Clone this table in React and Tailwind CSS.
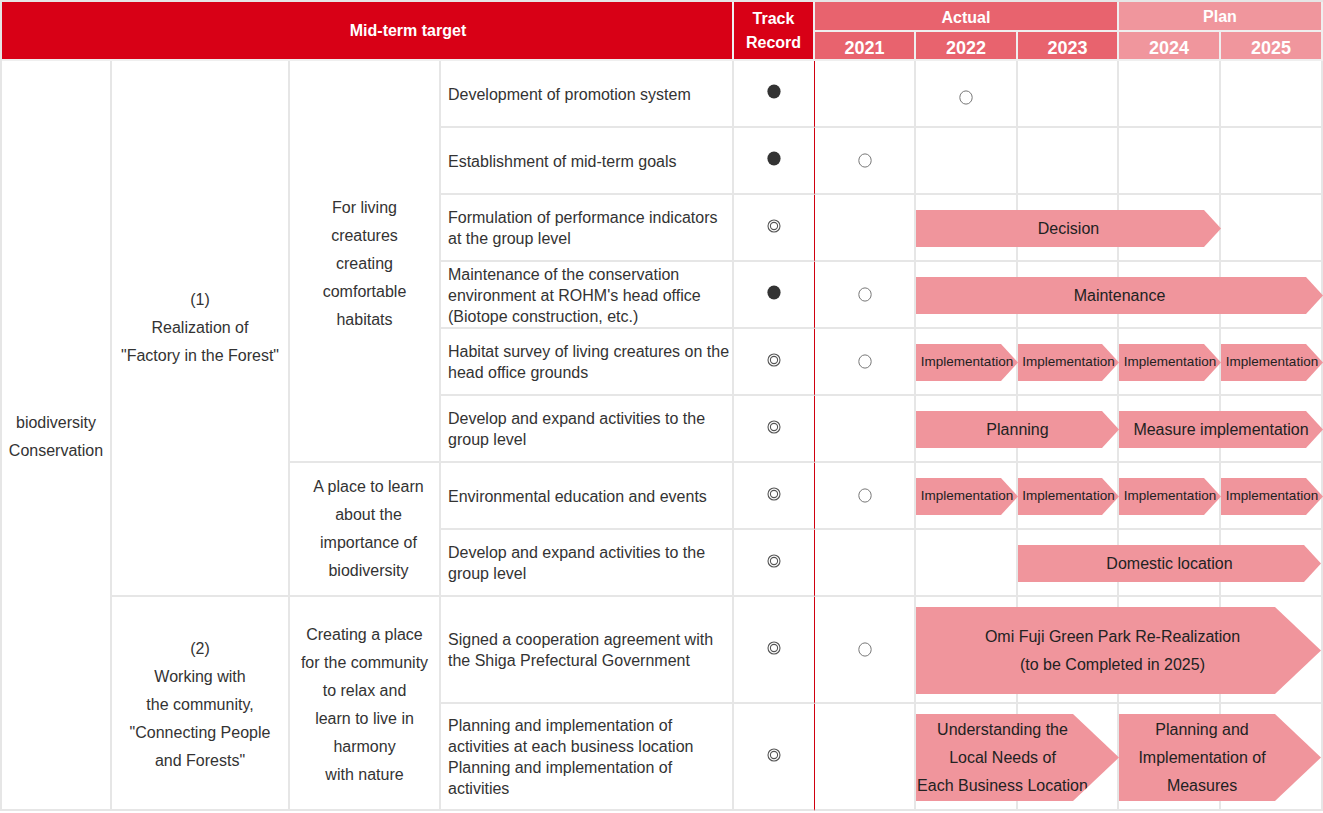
import React from 'react'
import clsx from 'clsx'

const rowStart = [
  'row-start-3',
  'row-start-4',
  'row-start-5',
  'row-start-6',
  'row-start-7',
  'row-start-8',
  'row-start-9',
  'row-start-10',
  'row-start-11',
  'row-start-12',
]
const colStart = {
  6: 'col-start-6',
  7: 'col-start-7',
  8: 'col-start-8',
  9: 'col-start-9',
  10: 'col-start-10',
}
const colSpan = { 1: 'col-span-1', 2: 'col-span-2', 3: 'col-span-3', 4: 'col-span-4' }

const rows = [
  { text: 'Development of promotion system', track: 'full', mark: 7 },
  { text: 'Establishment of mid-term goals', track: 'full', mark: 6 },
  {
    text: 'Formulation of performance indicators at the group level',
    track: 'double',
    arrows: [{ from: 7, span: 3, label: 'Decision' }],
  },
  {
    text: "Maintenance of the conservation environment at ROHM's head office (Biotope construction, etc.)",
    track: 'full',
    mark: 6,
    arrows: [{ from: 7, span: 4, label: 'Maintenance' }],
  },
  {
    text: 'Habitat survey of living creatures on the head office grounds',
    track: 'double',
    mark: 6,
    arrows: [7, 8, 9, 10].map((c) => ({ from: c, span: 1, label: 'Implementation', small: true })),
  },
  {
    text: 'Develop and expand activities to the group level',
    track: 'double',
    arrows: [
      { from: 7, span: 2, label: 'Planning' },
      { from: 9, span: 2, label: 'Measure implementation' },
    ],
  },
  {
    text: 'Environmental education and events',
    track: 'double',
    mark: 6,
    arrows: [7, 8, 9, 10].map((c) => ({ from: c, span: 1, label: 'Implementation', small: true })),
  },
  {
    text: 'Develop and expand activities to the group level',
    track: 'double',
    arrows: [{ from: 8, span: 3, label: 'Domestic location', inset: true }],
  },
  {
    text: 'Signed a cooperation agreement with the Shiga Prefectural Government',
    track: 'double',
    mark: 6,
    arrows: [
      {
        from: 7,
        span: 4,
        big: true,
        inset: true,
        pad: 'pr-[12px]',
        label: (
          <>
            Omi Fuji Green Park Re-Realization
            <br />
            (to be Completed in 2025)
          </>
        ),
      },
    ],
  },
  {
    text: 'Planning and implementation of activities at each business location Planning and implementation of activities',
    track: 'double',
    arrows: [
      {
        from: 7,
        span: 2,
        big: true,
        pad: 'pr-[30px]',
        label: (
          <>
            Understanding the
            <br />
            Local Needs of
            <br />
            Each Business Location
          </>
        ),
      },
      {
        from: 9,
        span: 2,
        big: true,
        inset: true,
        pad: 'pr-[36px]',
        label: (
          <>
            Planning and
            <br />
            Implementation of
            <br />
            Measures
          </>
        ),
      },
    ],
  },
]

function Mark({ type }) {
  if (type === 'full')
    return (
      <svg width="14" height="15" viewBox="0 0 14 15">
        <ellipse cx="7" cy="7.5" rx="6.6" ry="7" fill="#333" />
      </svg>
    )
  if (type === 'double')
    return (
      <svg width="14" height="14" viewBox="0 0 14 14">
        <circle cx="7" cy="7" r="6" fill="none" stroke="#555" strokeWidth="1.1" />
        <circle cx="7" cy="7" r="3.6" fill="none" stroke="#555" strokeWidth="1.1" />
      </svg>
    )
  return (
    <svg width="14" height="15" viewBox="0 0 14 15">
      <ellipse cx="7" cy="7.5" rx="6.2" ry="6.6" fill="#fff" stroke="#777" strokeWidth="1" />
    </svg>
  )
}

function Arrow({ row, a }) {
  return (
    <div
      className={clsx(
        'relative z-10 self-center flex items-center justify-center whitespace-nowrap bg-[#f0959c] text-center text-[#222]',
        colStart[a.from],
        colSpan[a.span],
        rowStart[row],
        a.big
          ? 'h-[87px] leading-[28px] [clip-path:polygon(0_0,calc(100%_-_46px)_0,100%_50%,calc(100%_-_46px)_100%,0_100%)]'
          : 'h-[37px] [clip-path:polygon(0_0,calc(100%_-_17px)_0,100%_50%,calc(100%_-_17px)_100%,0_100%)]',
        a.small ? 'text-[13.5px]' : 'text-[16px]',
        a.inset && 'mr-[2px]',
        a.pad
      )}
    >
      <span>{a.label}</span>
    </div>
  )
}

const head = 'flex items-center justify-center text-center font-bold text-white border-r-2 border-b-2 border-[#efefef]'
const cell = 'border-r-2 border-b-2 border-[#e6e6e6]'
const side = 'flex items-center justify-center text-center leading-[28px] ' + cell

export default function App() {
  return (
    <div className="w-[1323px] bg-white font-['Liberation_Sans',Arial,sans-serif] text-[16px] text-[#333]">
      <div className="grid grid-cols-[110px_178px_151px_293px_81px_101px_102px_101px_102px_102px] grid-rows-[30px_29px_repeat(8,67px)_107px_107px] border-l-2 border-t-2 border-[#e6e6e6]">
        {/* header */}
        <div className={clsx(head, 'col-start-1 col-span-4 row-start-1 row-span-2 bg-[#d80016] pl-[82px] pt-[1px]')}>
          Mid-term target
        </div>
        <div className={clsx(head, 'col-start-5 row-start-1 row-span-2 bg-[#d80016] leading-[24px] pt-[1px]')}>
          Track
          <br />
          Record
        </div>
        <div className={clsx(head, 'col-start-6 col-span-3 row-start-1 bg-[#e8636e] pt-[3px]')}>Actual</div>
        <div className={clsx(head, 'col-start-9 col-span-2 row-start-1 bg-[#f0969d] pt-[1px]')}>Plan</div>
        <div className={clsx(head, 'col-start-6 row-start-2 bg-[#e8636e] text-[18px] pt-[5px]')}>2021</div>
        <div className={clsx(head, 'col-start-7 row-start-2 bg-[#e8636e] text-[18px] pt-[5px]')}>2022</div>
        <div className={clsx(head, 'col-start-8 row-start-2 bg-[#e8636e] text-[18px] pt-[5px]')}>2023</div>
        <div className={clsx(head, 'col-start-9 row-start-2 bg-[#f0969d] text-[18px] pt-[5px]')}>2024</div>
        <div className={clsx(head, 'col-start-10 row-start-2 bg-[#f0969d] text-[18px] pt-[5px]')}>2025</div>

        {/* left groups */}
        <div className={clsx(side, 'col-start-1 row-start-3 row-span-10')}>
          <p className="mt-[4px]">
            biodiversity
            <br />
            Conservation
          </p>
        </div>
        <div className={clsx(side, 'col-start-2 row-start-3 row-span-8')}>
          <p>
            (1)
            <br />
            Realization of
            <br />
            "Factory in the Forest"
          </p>
        </div>
        <div className={clsx(side, 'col-start-2 row-start-11 row-span-2')}>
          <p className="mt-[3px]">
            (2)
            <br />
            Working with
            <br />
            the community,
            <br />
            "Connecting People
            <br />
            and Forests"
          </p>
        </div>
        <div className={clsx(side, 'col-start-3 row-start-3 row-span-6')}>
          <p className="mt-[5px]">
            For living
            <br />
            creatures
            <br />
            creating
            <br />
            comfortable
            <br />
            habitats
          </p>
        </div>
        <div className={clsx(side, 'col-start-3 row-start-9 row-span-2')}>
          <p className="pl-[8px]">
            A place to learn
            <br />
            about the
            <br />
            importance of
            <br />
            biodiversity
          </p>
        </div>
        <div className={clsx(side, 'col-start-3 row-start-11 row-span-2')}>
          <p className="mt-[3px]">
            Creating a place
            <br />
            for the community
            <br />
            to relax and
            <br />
            learn to live in
            <br />
            harmony
            <br />
            with nature
          </p>
        </div>

        {/* body rows */}
        {rows.map((r, i) => (
          <React.Fragment key={i}>
            <div className={clsx(cell, 'col-start-4 flex items-center pl-[7px] pr-[2px] pt-[1px] leading-[21px]', rowStart[i])}>
              <p>{r.text}</p>
            </div>
            <div
              className={clsx(
                'col-start-5 flex items-center justify-center border-b-2 border-r border-b-[#e6e6e6] border-r-[#d0000f] pb-[4px]',
                rowStart[i]
              )}
            >
              <Mark type={r.track} />
            </div>
            {[6, 7, 8, 9, 10].map((c) => (
              <div key={c} className={clsx(cell, 'flex items-center justify-center', colStart[c], rowStart[i])}>
                {r.mark === c && (
                  <span className={i === 0 ? 'mt-[7px]' : ''}>
                    <Mark type="open" />
                  </span>
                )}
              </div>
            ))}
            {(r.arrows || []).map((a, j) => (
              <Arrow key={j} row={i} a={a} />
            ))}
          </React.Fragment>
        ))}
      </div>
    </div>
  )
}
